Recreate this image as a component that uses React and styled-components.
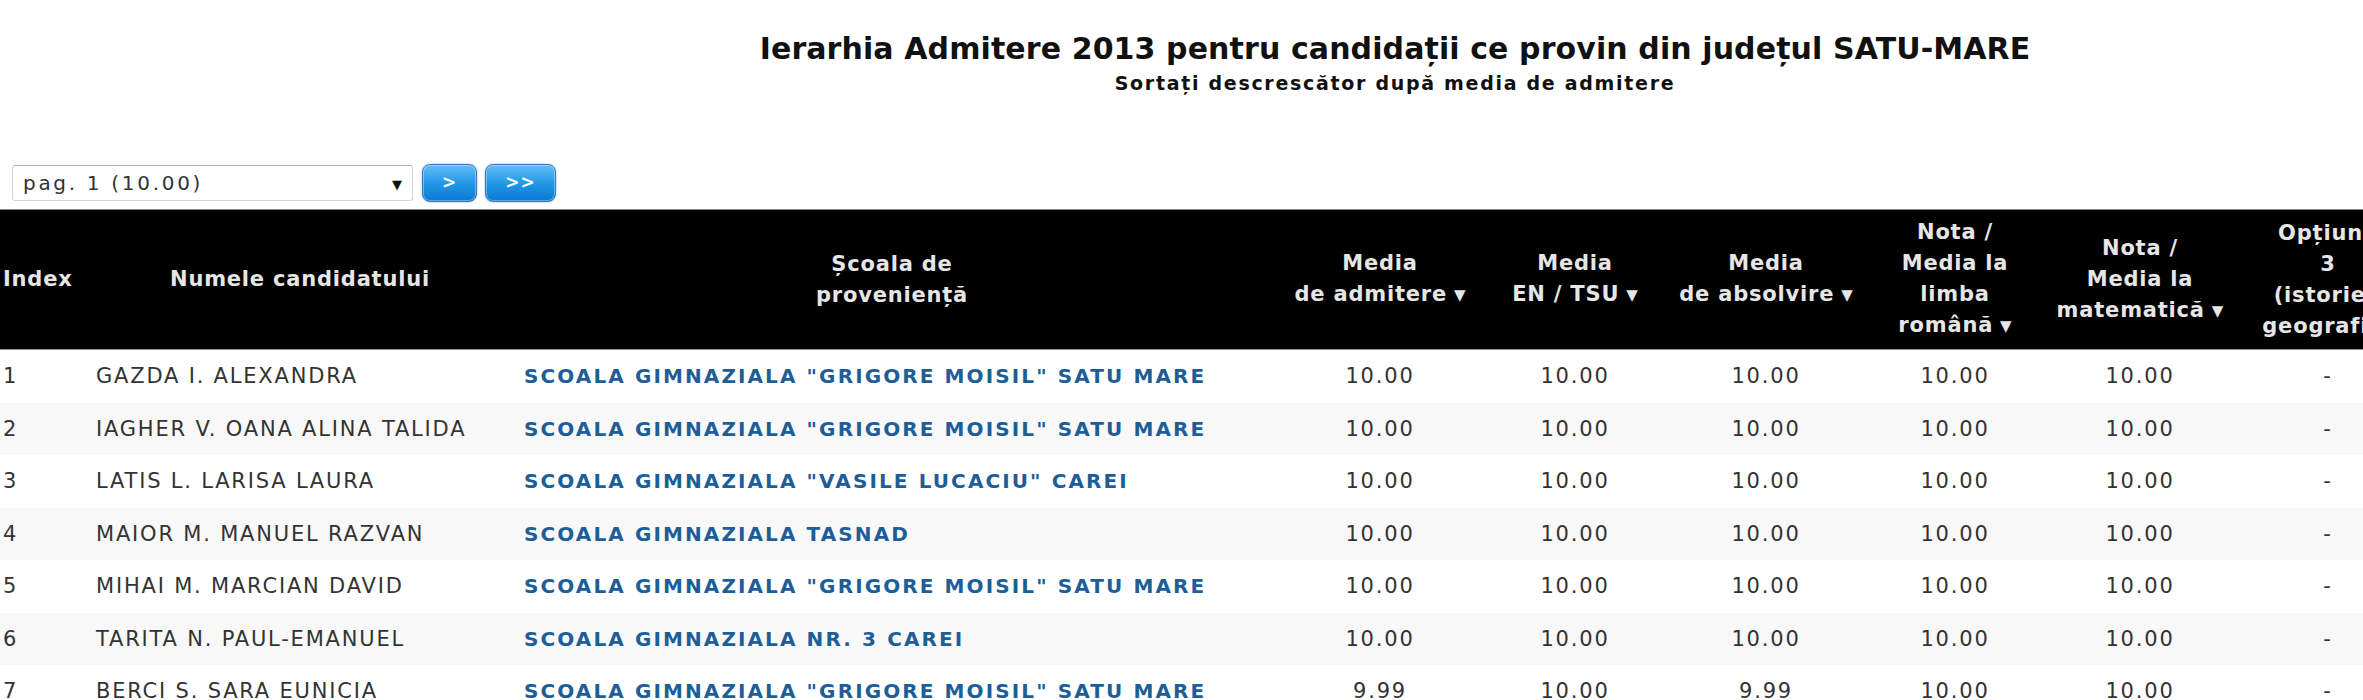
import React from "react";
import styled, { createGlobalStyle } from "styled-components";

const GlobalStyle = createGlobalStyle`
  body {
    margin: 0;
    background: #ffffff;
    font-family: "DejaVu Sans", Verdana, sans-serif;
    color: #333333;
  }
`;

const Page = styled.div`
  width: 2790px;
`;

const Heading = styled.header`
  display: flex;
  flex-direction: column;
  align-items: center;
  padding-top: 31px;
  padding-bottom: 70px;
`;

const Title = styled.h1`
  margin: 0;
  font-size: 30px;
  line-height: 36px;
  letter-spacing: 0.1px;
  font-weight: bold;
  color: #111111;
`;

const Subtitle = styled.h2`
  margin: 5px 0 0;
  font-size: 19px;
  line-height: 22px;
  letter-spacing: 1.7px;
  font-weight: bold;
  color: #111111;
`;

const Toolbar = styled.div`
  display: flex;
  align-items: center;
  gap: 8px;
  padding-left: 12px;
  height: 38px;
  margin-bottom: 7px;
`;

const PageSelect = styled.div`
  display: flex;
  align-items: center;
  justify-content: space-between;
  box-sizing: border-box;
  width: 401px;
  height: 36px;
  margin-right: 1px;
  padding: 0 8px 0 10px;
  border: 1px solid #d4d4d4;
  border-top-color: #b5b5b5;
  border-radius: 3px;
  background: #ffffff;
  font-size: 20px;
  letter-spacing: 2.7px;
  color: #333333;
`;

const SelectArrow = styled.span`
  font-size: 13px;
  letter-spacing: 0;
  color: #111111;
  padding-top: 3px;
  margin-right: 2px;
`;

const NavButton = styled.button`
  box-sizing: border-box;
  width: ${({ $wide }) => ($wide ? "71px" : "55px")};
  height: 38px;
  padding: 0 0 2px;
  border: 1px solid #3a78b8;
  border-radius: 8px;
  background: linear-gradient(#62bdf6, #1f95e6 55%, #0c78cf);
  box-shadow: inset 0 0 0 1px rgba(255, 255, 255, 0.35), 0 0 2px rgba(40, 110, 190, 0.6);
  color: #ffffff;
  font-family: "DejaVu Sans", Verdana, sans-serif;
  font-size: 17px;
  font-weight: bold;
  letter-spacing: 1px;
  cursor: pointer;
`;

const Table = styled.table`
  width: 2790px;
  table-layout: fixed;
  border-collapse: collapse;
`;

const HeadCell = styled.th`
  height: 139px;
  padding: 0 4px;
  background: #000000;
  border-top: 1px solid #8a8a8a;
  border-bottom: 1px solid #8a8a8a;
  color: #e6e6e6;
  font-size: 21px;
  line-height: 31px;
  letter-spacing: 0.8px;
  font-weight: bold;
  text-align: ${({ $left }) => ($left ? "left" : "center")};
  padding-left: ${({ $left }) => ($left ? "3px" : "4px")};
  vertical-align: middle;
  white-space: nowrap;
`;

const SortArrow = styled.span`
  font-size: 15px;
  letter-spacing: 0;
  margin-left: 7px;
  vertical-align: 1px;
`;

const Row = styled.tr`
  background: ${({ $odd }) => ($odd ? "#ffffff" : "#f8f8f8")};
`;

const Cell = styled.td`
  height: 52.5px;
  padding: 0 0 0 ${({ $pad }) => $pad || 0}px;
  font-size: 21px;
  letter-spacing: 1.8px;
  color: #333333;
  text-align: ${({ $center }) => ($center ? "center" : "left")};
  vertical-align: middle;
  white-space: nowrap;
  overflow: hidden;
`;

const SchoolLink = styled.a`
  color: #1d5e98;
  font-size: 20px;
  font-weight: bold;
  letter-spacing: 2.1px;
  text-decoration: none;
`;

const columns = [90, 420, 764, 212, 178, 204, 174, 196, 180, 186, 186];

const headers = [
  { lines: ["Index"], left: true },
  { lines: ["Numele candidatului"] },
  { lines: ["Școala de", "proveniență"] },
  { lines: ["Media", "de admitere"], sort: true },
  { lines: ["Media", "EN / TSU"], sort: true },
  { lines: ["Media", "de absolvire"], sort: true },
  { lines: ["Nota /", "Media la", "limba", "română"], sort: true },
  { lines: ["Nota /", "Media la", "matematică"], sort: true },
  { lines: ["Opțiune", "3", "(istorie /", "geografie)"] },
  { lines: ["Limba", "maternă"] },
  { lines: ["Nota /", "Media la", "limba", "maternă"] },
];

const rows = [
  ["GAZDA I. ALEXANDRA", 'SCOALA GIMNAZIALA "GRIGORE MOISIL" SATU MARE', "10.00", "10.00", "10.00", "10.00", "10.00"],
  ["IAGHER V. OANA ALINA TALIDA", 'SCOALA GIMNAZIALA "GRIGORE MOISIL" SATU MARE', "10.00", "10.00", "10.00", "10.00", "10.00"],
  ["LATIS L. LARISA LAURA", 'SCOALA GIMNAZIALA "VASILE LUCACIU" CAREI', "10.00", "10.00", "10.00", "10.00", "10.00"],
  ["MAIOR M. MANUEL RAZVAN", "SCOALA GIMNAZIALA TASNAD", "10.00", "10.00", "10.00", "10.00", "10.00"],
  ["MIHAI M. MARCIAN DAVID", 'SCOALA GIMNAZIALA "GRIGORE MOISIL" SATU MARE', "10.00", "10.00", "10.00", "10.00", "10.00"],
  ["TARITA N. PAUL-EMANUEL", "SCOALA GIMNAZIALA NR. 3 CAREI", "10.00", "10.00", "10.00", "10.00", "10.00"],
  ["BERCI S. SARA EUNICIA", 'SCOALA GIMNAZIALA "GRIGORE MOISIL" SATU MARE', "9.99", "10.00", "9.99", "10.00", "10.00"],
];

export default function App() {
  return (
    <Page>
      <GlobalStyle />
      <Heading>
        <Title>Ierarhia Admitere 2013 pentru candidații ce provin din județul SATU-MARE</Title>
        <Subtitle>Sortați descrescător după media de admitere</Subtitle>
      </Heading>

      <Toolbar>
        <PageSelect>
          <span>pag. 1 (10.00)</span>
          <SelectArrow>▼</SelectArrow>
        </PageSelect>
        <NavButton>&gt;</NavButton>
        <NavButton $wide>&gt;&gt;</NavButton>
      </Toolbar>

      <Table>
        <colgroup>
          {columns.map((w, i) => (
            <col key={i} style={{ width: w }} />
          ))}
        </colgroup>
        <thead>
          <tr>
            {headers.map((h, i) => (
              <HeadCell key={i} $left={h.left}>
                {h.lines.map((line, j) => (
                  <React.Fragment key={j}>
                    {j > 0 && <br />}
                    {line}
                    {h.sort && j === h.lines.length - 1 && <SortArrow>▼</SortArrow>}
                  </React.Fragment>
                ))}
              </HeadCell>
            ))}
          </tr>
        </thead>
        <tbody>
          {rows.map((r, i) => (
            <Row key={i} $odd={i % 2 === 0}>
              <Cell $pad={3}>{i + 1}</Cell>
              <Cell $pad={6}>{r[0]}</Cell>
              <Cell $pad={14}>
                <SchoolLink href="#">{r[1]}</SchoolLink>
              </Cell>
              {r.slice(2).map((v, j) => (
                <Cell key={j} $center>
                  {v}
                </Cell>
              ))}
              <Cell $center>-</Cell>
              <Cell $center>-</Cell>
              <Cell $center>-</Cell>
            </Row>
          ))}
        </tbody>
      </Table>
    </Page>
  );
}
